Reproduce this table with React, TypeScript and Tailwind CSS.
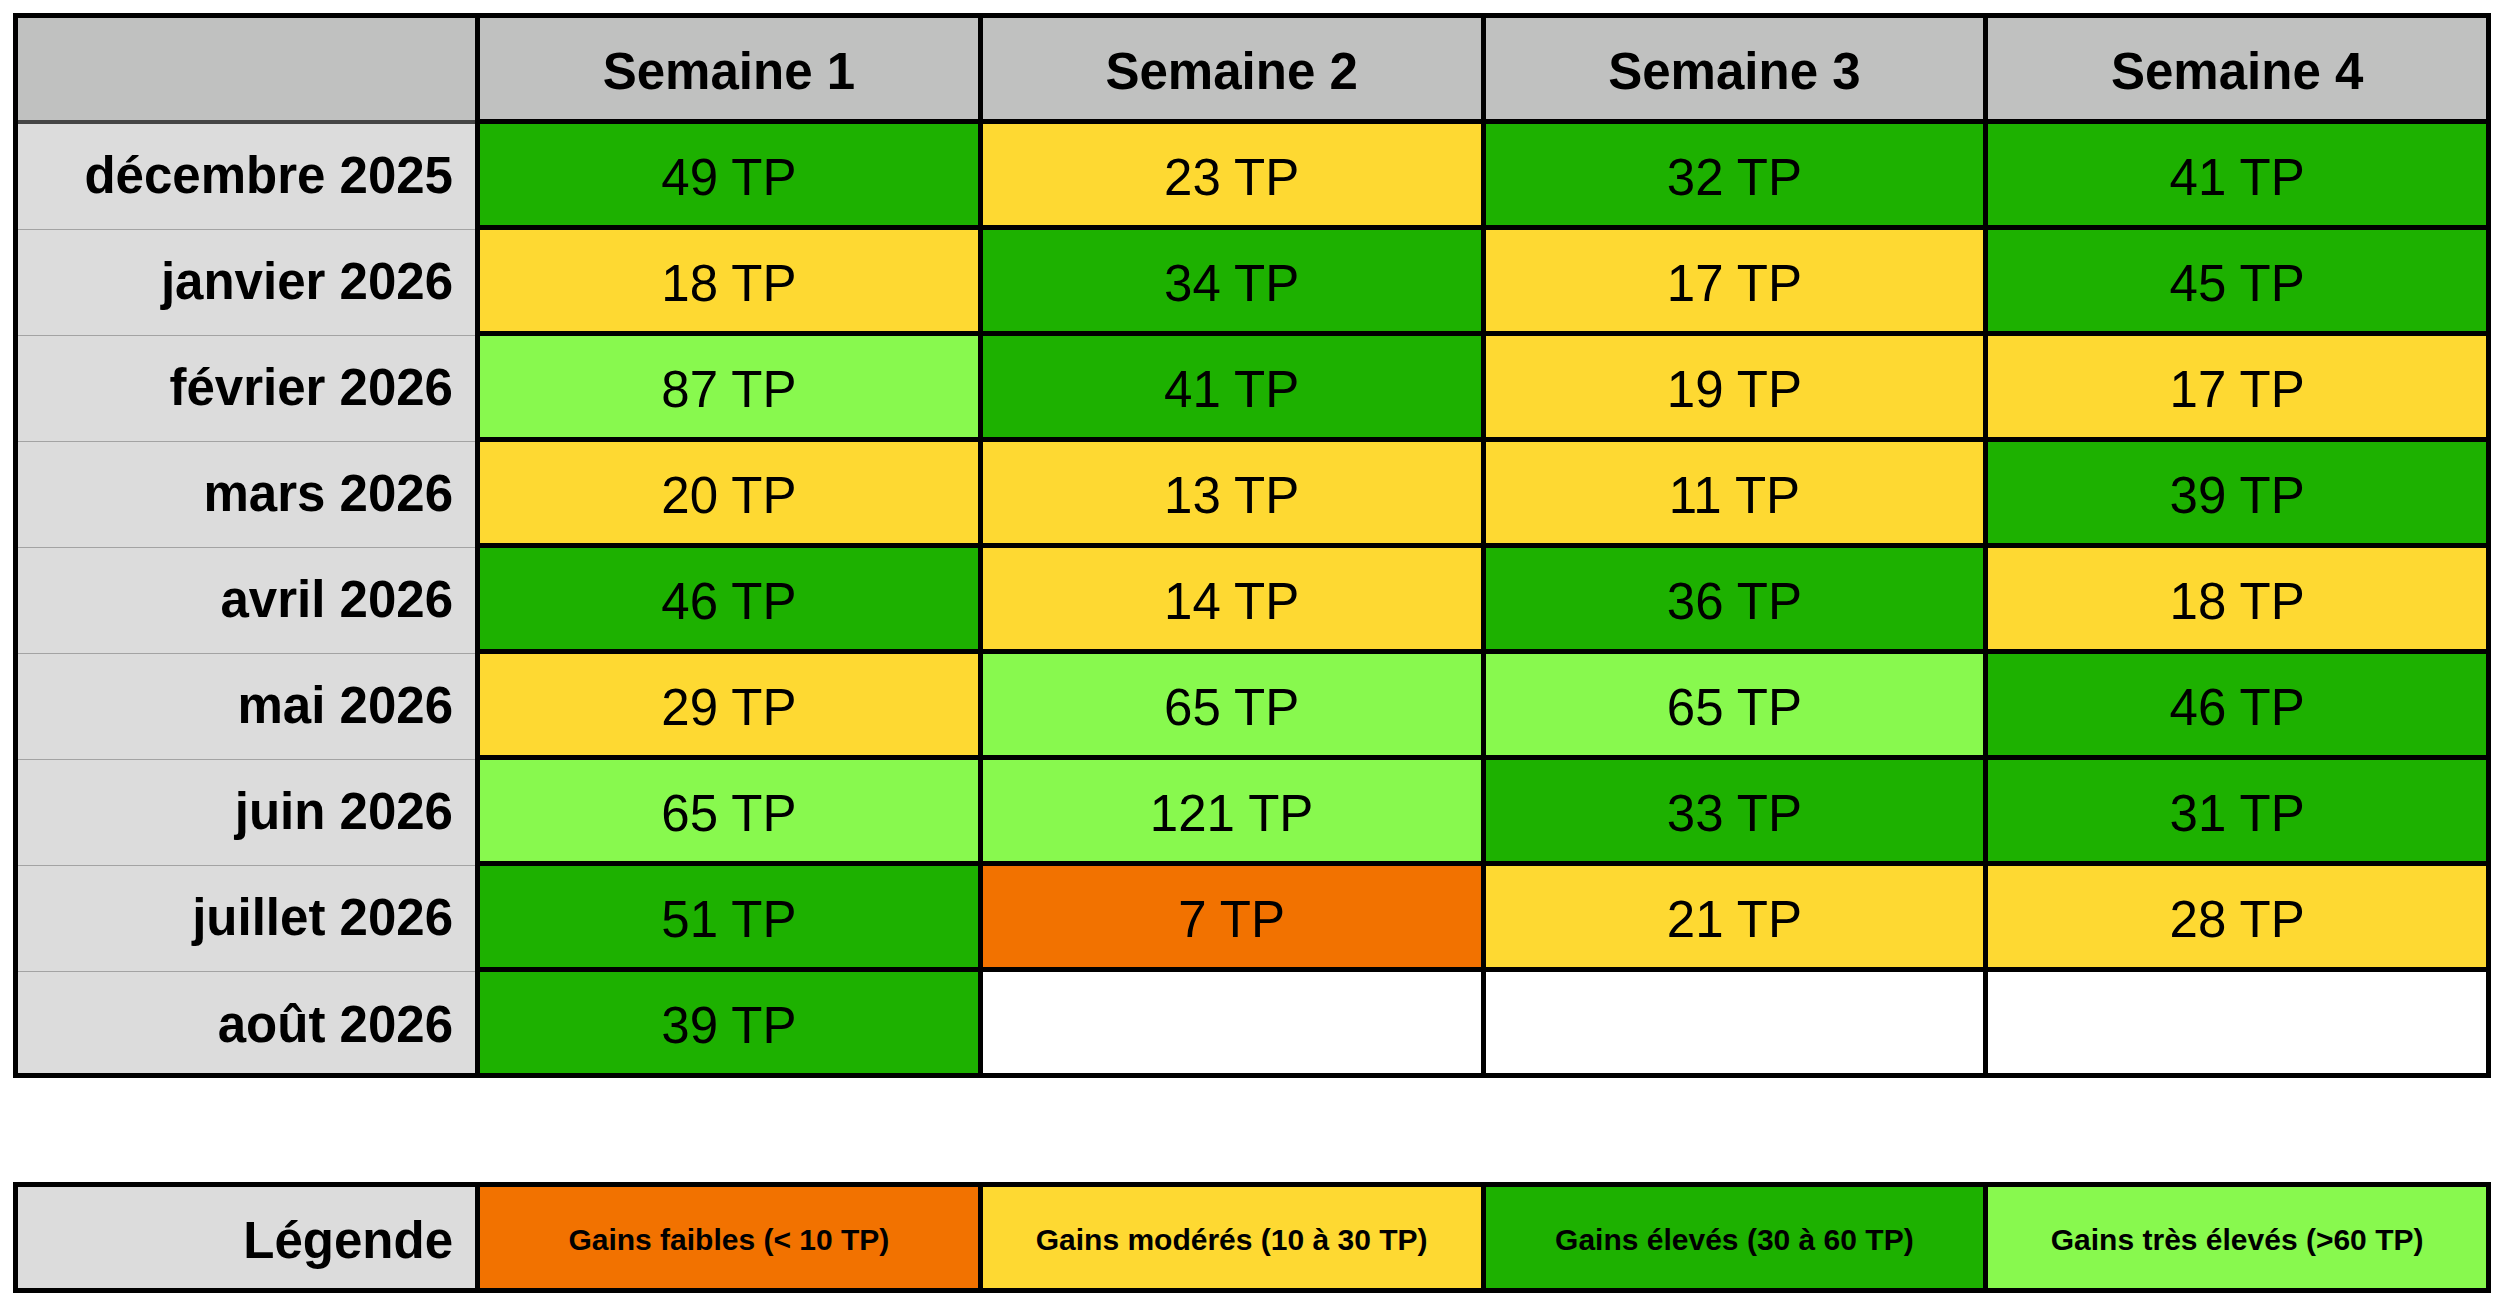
const weeks = ['Semaine 1', 'Semaine 2', 'Semaine 3', 'Semaine 4'];

const rows: { month: string; values: (number | null)[] }[] = [
  { month: 'décembre 2025', values: [49, 23, 32, 41] },
  { month: 'janvier 2026', values: [18, 34, 17, 45] },
  { month: 'février 2026', values: [87, 41, 19, 17] },
  { month: 'mars 2026', values: [20, 13, 11, 39] },
  { month: 'avril 2026', values: [46, 14, 36, 18] },
  { month: 'mai 2026', values: [29, 65, 65, 46] },
  { month: 'juin 2026', values: [65, 121, 33, 31] },
  { month: 'juillet 2026', values: [51, 7, 21, 28] },
  { month: 'août 2026', values: [39, null, null, null] },
];

const legend = [
  { label: 'Gains faibles (< 10 TP)', bg: 'bg-[#f27200]' },
  { label: 'Gains modérés (10 à 30 TP)', bg: 'bg-[#fed932]' },
  { label: 'Gains élevés (30 à 60 TP)', bg: 'bg-[#1db100]' },
  { label: 'Gains très élevés (>60 TP)', bg: 'bg-[#88f94e]' },
];

// colour bucket for a weekly gain
function cellBg(v: number | null) {
  if (v === null) return 'bg-white';
  if (v < 10) return 'bg-[#f27200]';
  if (v <= 30) return 'bg-[#fed932]';
  if (v <= 60) return 'bg-[#1db100]';
  return 'bg-[#88f94e]';
}

export default function App() {
  return (
    <div className="min-h-screen bg-white pt-[13px] pl-[13px] text-black font-['Liberation_Sans',Arial,sans-serif]">
      {/* Main table */}
      <div className="w-[2478px] border-[5px] border-black bg-black grid grid-cols-[457px_repeat(4,1fr)] gap-x-[5px]">
        {/* Header */}
        <div className="h-[106px] bg-[#c0c1c0] border-b-[4px] border-[#454545]" />
        {weeks.map((w) => (
          <div
            key={w}
            className="h-[106px] bg-[#c0c1c0] border-b-[5px] border-black flex items-center justify-center pt-[5px] text-[51px] font-bold leading-none"
          >
            {w}
          </div>
        ))}

        {/* Body */}
        {rows.map((r, i) => {
          const last = i === rows.length - 1;
          return (
            <>
              <div
                key={r.month}
                className={
                  last
                    ? 'h-[101px] bg-[#dcdcdc] flex items-center justify-end pr-[22px] pt-[4px] text-[51px] font-bold leading-none'
                    : 'h-[106px] bg-[#dcdcdc] border-b border-[#a3a3a3] flex items-center justify-end pr-[22px] pt-[2px] pb-[4px] text-[51px] font-bold leading-none'
                }
              >
                {r.month}
              </div>
              {r.values.map((v, j) => (
                <div
                  key={r.month + j}
                  className={`${last ? 'h-[101px]' : 'h-[106px] border-b-[5px] border-black'} ${cellBg(v)} flex items-center justify-center pt-[5px] text-[51px] leading-none`}
                >
                  {v !== null ? `${v} TP` : ''}
                </div>
              ))}
            </>
          );
        })}
      </div>

      {/* Legend */}
      <div className="mt-[104px] w-[2478px] border-[5px] border-black bg-black grid grid-cols-[457px_repeat(4,1fr)] gap-x-[5px]">
        <div className="h-[101px] bg-[#dcdcdc] flex items-center justify-end pr-[22px] pt-[5px] text-[51px] font-bold leading-none">
          Légende
        </div>
        {legend.map((l) => (
          <div
            key={l.label}
            className={`h-[101px] ${l.bg} flex items-center justify-center pt-[5px] text-[30px] font-bold leading-none`}
          >
            {l.label}
          </div>
        ))}
      </div>
    </div>
  );
}
